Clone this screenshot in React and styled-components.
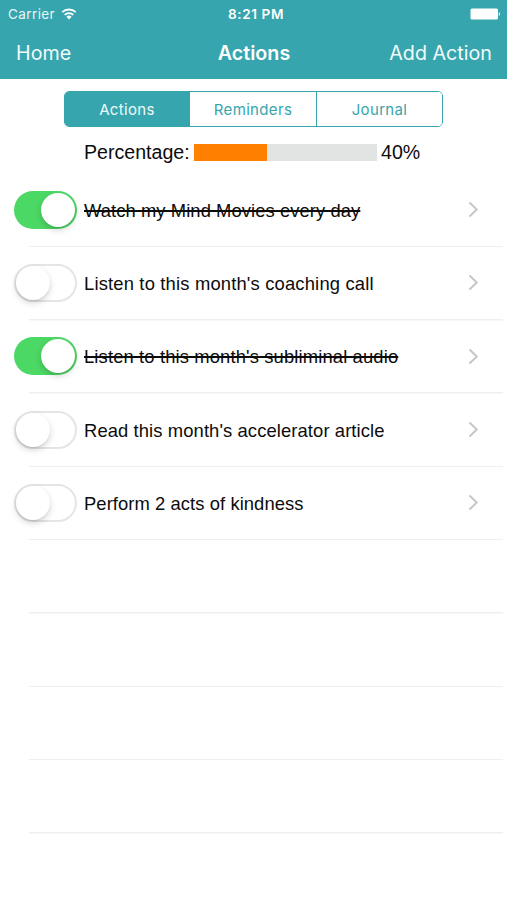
import { useState } from "react";
import styled, { createGlobalStyle } from "styled-components";

const TEAL = "#37a5ad";

const GlobalStyle = createGlobalStyle`
  * {
    box-sizing: border-box;
  }

  body {
    margin: 0;
    background-color: #ffffff;
  }
`;

const Screen = styled.main`
  display: flex;
  flex-direction: column;
  width: 507px;
  height: 900px;
  overflow: hidden;
  background-color: #ffffff;
  font-family: "Liberation Sans", Arial, sans-serif;
  color: #0c0c0c;
`;

const Header = styled.header`
  flex: none;
  height: 79px;
  background-color: ${TEAL};
  color: #ffffff;
  font-family: Inter, sans-serif;
`;

const Bar = styled.div`
  display: grid;
  grid-template-columns: 1fr auto 1fr;
  align-items: center;
`;

const StatusBar = styled(Bar)`
  height: 27px;
  padding: 0 6px 0 8px;
  font-size: 13px;
`;

const NavBar = styled(Bar)`
  height: 51px;
  padding: 0 15px 0 16px;
`;

const Carrier = styled.div`
  display: flex;
  align-items: center;
  gap: 6px;
  color: #e4f6f7;
  font-size: 13.5px;
  letter-spacing: 0.4px;
`;

const Clock = styled.div`
  padding-left: 3px;
  font-size: 13.5px;
  font-weight: 600;
  letter-spacing: 0.65px;
`;

const BatteryIcon = styled.svg`
  justify-self: end;
`;

const NavButton = styled.button`
  justify-self: ${({ $align }) => $align};
  padding: 0;
  border: none;
  background: none;
  color: #effbfb;
  font-family: inherit;
  font-size: 19.7px;
`;

const Title = styled.h1`
  margin: 0;
  font-size: 19.7px;
  font-weight: 600;
`;

const Segments = styled.nav`
  display: grid;
  flex: none;
  grid-template-columns: 125px 127px 1fr;
  width: 379px;
  height: 36px;
  margin: 12px 0 0 64px;
  border: 1px solid ${TEAL};
  border-radius: 5px;
  overflow: hidden;
`;

const Segment = styled.button`
  padding: 0;
  border: none;
  border-right: 1px solid ${TEAL};
  background-color: ${({ $active }) => ($active ? TEAL : "#ffffff")};
  color: ${({ $active }) => ($active ? "#effbfb" : TEAL)};
  font-family: Inter, sans-serif;
  font-size: 15px;
  letter-spacing: 0.35px;

  &:last-child {
    border-right: none;
  }
`;

const Progress = styled.div`
  display: flex;
  flex: none;
  align-items: center;
  height: 47px;
  padding: 3px 0 0 84px;
  font-size: 19.6px;
`;

const ProgressLabel = styled.span`
  width: 110px;
`;

const Track = styled.div`
  width: 183px;
  height: 17px;
  margin-right: 4px;
  background-color: #e2e3e3;
`;

const Fill = styled.div`
  height: 100%;
  background-color: #ff8000;
`;

const List = styled.ul`
  display: grid;
  flex: none;
  grid-auto-rows: 73.3px;
  margin: 0;
  padding: 0 4px 0 14px;
  list-style: none;
`;

const Row = styled.li`
  display: flex;
  align-items: center;
  padding: 0 24px 2px 0;
  background: linear-gradient(#efeff0, #efeff0) 15px 100% / 100% 1.5px no-repeat;
`;

const Switch = styled.button`
  display: flex;
  flex: none;
  align-items: center;
  justify-content: ${({ $on }) => ($on ? "flex-end" : "flex-start")};
  width: 63px;
  height: 38px;
  padding: ${({ $on }) => ($on ? "0 2px" : "0")};
  border: ${({ $on }) => ($on ? "none" : "2px solid #e5e5e6")};
  border-radius: 19px;
  background-color: ${({ $on }) => ($on ? "#4cd864" : "#ffffff")};
`;

const Knob = styled.span`
  width: 34px;
  height: 34px;
  border-radius: 50%;
  background-color: #ffffff;
  box-shadow: 0 3px 6px rgba(0, 0, 0, 0.17), 0 1px 1px rgba(0, 0, 0, 0.07);
`;

const Label = styled.span`
  margin: 2px auto 0 7px;
  font-size: 18.4px;
  white-space: nowrap;
  letter-spacing: ${({ $spacing }) => $spacing}px;
  text-decoration: ${({ $done }) => ($done ? "line-through 2px" : "none")};
`;

const actions = [
  { text: "Watch my Mind Movies every day", done: true, spacing: 0.07 },
  { text: "Listen to this month's coaching call", done: false, spacing: 0.17 },
  { text: "Listen to this month's subliminal audio", done: true, spacing: 0.13 },
  { text: "Read this month's accelerator article", done: false, spacing: 0.1 },
  { text: "Perform 2 acts of kindness", done: false, spacing: 0.07 },
];

const tabs = ["Actions", "Reminders", "Journal"];

function WifiIcon() {
  return (
    <svg width="16" height="12" viewBox="0 0 15 12" fill="none">
      <path d="M.8 4.2a9.6 9.6 0 0 1 13.4 0" stroke="#fff" strokeWidth="1.8" />
      <path d="M3.2 6.8a6.1 6.1 0 0 1 8.6 0" stroke="#fff" strokeWidth="1.8" />
      <path d="M7.5 11.4 4.9 8.8a3.7 3.7 0 0 1 5.2 0z" fill="#fff" />
    </svg>
  );
}

function Chevron() {
  return (
    <svg width="11" height="17" viewBox="0 0 11 17" fill="none">
      <path d="m1.5 1.5 7.3 7-7.3 7" stroke="#c7c7cb" strokeWidth="2" />
    </svg>
  );
}

function ActionRow({ action, onToggle }) {
  return (
    <Row>
      <Switch
        $on={action.done}
        role="switch"
        aria-checked={action.done}
        onClick={onToggle}
      >
        <Knob />
      </Switch>
      <Label $done={action.done} $spacing={action.spacing}>
        {action.text}
      </Label>
      <Chevron />
    </Row>
  );
}

function App() {
  const [items, setItems] = useState(actions);
  const [tab, setTab] = useState("Actions");
  const percent = (items.filter((item) => item.done).length / items.length) * 100;

  const toggle = (index) =>
    setItems(
      items.map((item, i) => (i === index ? { ...item, done: !item.done } : item))
    );

  return (
    <Screen>
      <GlobalStyle />
      <Header>
        <StatusBar>
          <Carrier>
            Carrier
            <WifiIcon />
          </Carrier>
          <Clock>8:21 PM</Clock>
          <BatteryIcon width="31" height="12" viewBox="0 0 31 12" fill="#fff">
            <rect x="0.5" y="0.5" width="27.5" height="11" rx="1.5" />
            <path d="M28.8 4.2c1.5.3 1.5 3.3 0 3.6z" />
          </BatteryIcon>
        </StatusBar>
        <NavBar>
          <NavButton $align="start">Home</NavButton>
          <Title>Actions</Title>
          <NavButton $align="end">Add Action</NavButton>
        </NavBar>
      </Header>
      <Segments>
        {tabs.map((name) => (
          <Segment key={name} $active={name === tab} onClick={() => setTab(name)}>
            {name}
          </Segment>
        ))}
      </Segments>
      <Progress>
        <ProgressLabel>Percentage:</ProgressLabel>
        <Track>
          <Fill style={{ width: `${percent}%` }} />
        </Track>
        {percent}%
      </Progress>
      <List>
        {items.map((item, i) => (
          <ActionRow key={item.text} action={item} onToggle={() => toggle(i)} />
        ))}
        {[0, 1, 2, 3].map((i) => (
          <Row key={i} />
        ))}
      </List>
    </Screen>
  );
}

export default App;
